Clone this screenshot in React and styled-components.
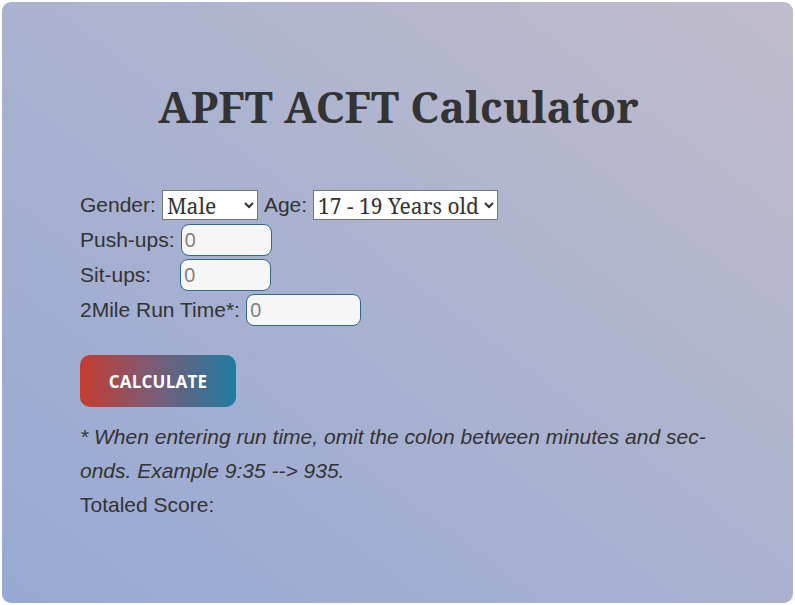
import React from "react";
import styled, { createGlobalStyle } from "styled-components";

const Global = createGlobalStyle`
  html, body { margin: 0; padding: 0; background: #ffffff; }
  body { padding: 2px; box-sizing: border-box; }
  * { box-sizing: border-box; }
`;

const Card = styled.main`
  height: 601px;
  border-radius: 9px;
  background: linear-gradient(to top right, #97a9d4 0%, #aab2d0 50%, #c1bccb 100%);
  padding: 77px 78px 0 78px;
  color: #333333;
  font-family: "Liberation Sans", Arial, sans-serif;
  display: flex;
  flex-direction: column;
`;

const Title = styled.h1`
  margin: 0 0 52px 2px;
  text-align: center;
  font-family: "Noto Serif", "DejaVu Serif", serif;
  font-weight: 700;
  font-size: 43px;
  line-height: 56px;
  color: #333333;
`;

const Form = styled.form`
  display: flex;
  flex-direction: column;
`;

const Row = styled.div`
  display: flex;
  align-items: center;
  height: 35px;
  gap: 6px;
`;

const Label = styled.label`
  font-size: 21px;
  color: #333333;
  white-space: nowrap;
  min-width: ${(p) => p.$width || "auto"};
`;

const Select = styled.select`
  width: ${(p) => p.$width};
  height: 30px;
  font-family: "Noto Serif", "DejaVu Serif", serif;
  font-size: 21px;
  color: #333333;
  background: #ffffff;
  border: 1px solid #767676;
  border-radius: 0;
  padding: 0;
`;

const Field = styled.input`
  width: ${(p) => p.$width};
  height: 32px;
  font-family: "Open Sans", "Noto Sans", sans-serif;
  font-size: 20px;
  color: #333333;
  background: #f6f6f6;
  border: 1px solid #2f6a8c;
  border-radius: 8px;
  padding: 0 3px;
  outline: none;
  &::placeholder { color: #7a7a7a; }
`;

const Button = styled.button`
  align-self: flex-start;
  margin-top: 28px;
  width: 156px;
  height: 52px;
  border: none;
  border-radius: 10px;
  background: linear-gradient(to right, #c43d30 0%, #7d5a74 45%, #207ba0 100%);
  color: #ffffff;
  font-family: "Open Sans", "Noto Sans", sans-serif;
  font-weight: 700;
  font-size: 17px;
  letter-spacing: 0.2px;
  cursor: pointer;
`;

const Note = styled.p`
  margin: 13px 0 0 0;
  padding-right: 4px;
  font-style: italic;
  font-size: 21px;
  line-height: 34px;
  color: #333333;
`;

const Score = styled.p`
  margin: 0;
  font-size: 21px;
  line-height: 34px;
  color: #333333;
`;

export default function App() {
  return (
    <>
      <Global />
      <Card>
        <Title>APFT ACFT Calculator</Title>
        <Form onSubmit={(e) => e.preventDefault()}>
          <Row>
            <Label>Gender:</Label>
            <Select $width="96px" defaultValue="male">
              <option value="male">Male</option>
              <option value="female">Female</option>
            </Select>
            <Label>Age:</Label>
            <Select $width="185px" defaultValue="17">
              <option value="17">17 - 19 Years old</option>
              <option value="22">22 - 26 Years old</option>
            </Select>
          </Row>
          <Row>
            <Label>Push-ups:</Label>
            <Field $width="91px" placeholder="0" />
          </Row>
          <Row>
            <Label $width="94px">Sit-ups:</Label>
            <Field $width="91px" placeholder="0" />
          </Row>
          <Row>
            <Label>2Mile Run Time*:</Label>
            <Field $width="115px" placeholder="0" />
          </Row>
          <Button type="submit">CALCULATE</Button>
        </Form>
        <Note>
          * When entering run time, omit the colon between minutes and sec{"\u00AD"}onds. Example 9:35 --&gt; 935.
        </Note>
        <Score>Totaled Score:</Score>
      </Card>
    </>
  );
}
